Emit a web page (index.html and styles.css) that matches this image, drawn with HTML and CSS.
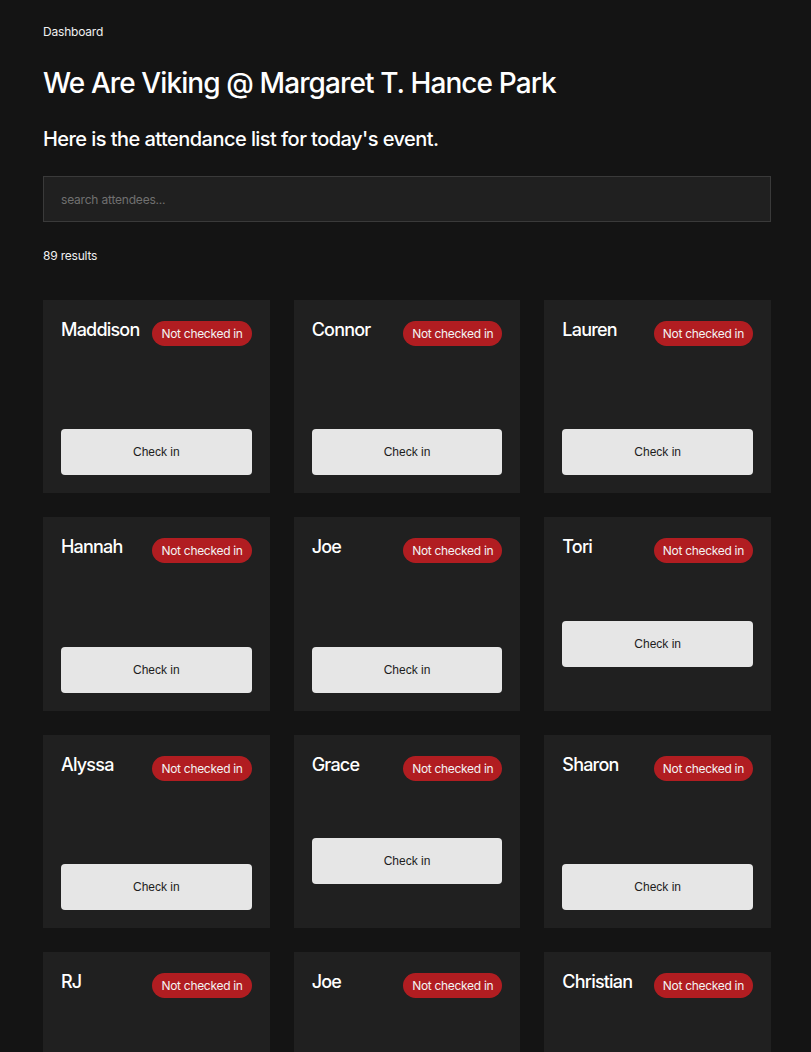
FILE: index.html
```html
<!DOCTYPE html>
<html lang="en">
<head>
    <meta charset="UTF-8">
    <meta name="viewport" content="width=device-width, initial-scale=1.0">
    <title>Attendance</title>
    <link rel="stylesheet" href="styles.css">
</head>
<body>

    <div class="page">
        <a class="crumb" href="#">Dashboard</a>
        <h1 class="event-title">We Are Viking @ Margaret T. Hance Park</h1>
        <h2 class="event-sub">Here is the attendance list for today's event.</h2>

        <input type="text" class="search" placeholder="search attendees...">

        <p class="count">89 results</p>

        <div class="grid">
            <div class="card">
                <div class="card-head"><span class="name">Maddison</span><span class="badge">Not checked in</span></div>
                <button class="check-btn">Check in</button>
            </div>
            <div class="card">
                <div class="card-head"><span class="name">Connor</span><span class="badge">Not checked in</span></div>
                <button class="check-btn">Check in</button>
            </div>
            <div class="card">
                <div class="card-head"><span class="name">Lauren</span><span class="badge">Not checked in</span></div>
                <button class="check-btn">Check in</button>
            </div>

            <div class="card">
                <div class="card-head"><span class="name">Hannah</span><span class="badge">Not checked in</span></div>
                <button class="check-btn">Check in</button>
            </div>
            <div class="card">
                <div class="card-head"><span class="name">Joe</span><span class="badge">Not checked in</span></div>
                <button class="check-btn">Check in</button>
            </div>
            <div class="card">
                <div class="card-head"><span class="name">Tori</span><span class="badge">Not checked in</span></div>
                <button class="check-btn">Check in</button>
                <div class="card-foot"></div>
            </div>

            <div class="card">
                <div class="card-head"><span class="name">Alyssa</span><span class="badge">Not checked in</span></div>
                <button class="check-btn">Check in</button>
            </div>
            <div class="card">
                <div class="card-head"><span class="name">Grace</span><span class="badge">Not checked in</span></div>
                <button class="check-btn">Check in</button>
                <div class="card-foot"></div>
            </div>
            <div class="card">
                <div class="card-head"><span class="name">Sharon</span><span class="badge">Not checked in</span></div>
                <button class="check-btn">Check in</button>
            </div>

            <div class="card">
                <div class="card-head"><span class="name">RJ</span><span class="badge">Not checked in</span></div>
                <button class="check-btn">Check in</button>
            </div>
            <div class="card">
                <div class="card-head"><span class="name">Joe</span><span class="badge">Not checked in</span></div>
                <button class="check-btn">Check in</button>
            </div>
            <div class="card">
                <div class="card-head"><span class="name">Christian</span><span class="badge">Not checked in</span></div>
                <button class="check-btn">Check in</button>
            </div>
        </div>
    </div>

</body>
</html>
```

FILE: styles.css
```css
body {
    margin: 0;
    background: #141414;
    color: #f5f5f5;
    font-family: Inter, "Noto Sans", sans-serif;
}

.page {
    padding: 23px 40px 40px 43px;
}

.crumb {
    display: block;
    font-size: 12px;
    line-height: 18px;
    letter-spacing: -0.2px;
    color: #f0f0f0;
    text-decoration: none;
}

.event-title {
    margin: 24px 0 0;
    font-size: 28px;
    line-height: 36px;
    font-weight: 500;
    letter-spacing: -0.9px;
    color: #fff;
}

.event-sub {
    margin: 24px 0 0;
    font-size: 20px;
    line-height: 28px;
    font-weight: 500;
    letter-spacing: -0.55px;
    color: #fff;
}

.search {
    display: block;
    box-sizing: border-box;
    width: 100%;
    height: 46px;
    margin-top: 23px;
    padding: 0 17px;
    background: #202020;
    border: 1px solid #3a3a3a;
    color: #eee;
    font-family: Inter, sans-serif;
    font-size: 12px;
    letter-spacing: -0.2px;
    outline: none;
}

.search::placeholder {
    color: #707070;
}

.count {
    margin: 25px 0 0;
    font-size: 12px;
    line-height: 18px;
    letter-spacing: -0.2px;
    color: #f0f0f0;
}

.grid {
    display: grid;
    grid-template-columns: repeat(3, 1fr);
    grid-auto-rows: 193.33px;
    gap: 24px;
    margin-top: 35px;
}

.card {
    display: flex;
    flex-direction: column;
    background: #202020;
    padding: 18px;
}

.card-head {
    display: flex;
    justify-content: space-between;
    align-items: flex-start;
}

.name {
    font-size: 18px;
    line-height: 24px;
    font-weight: 500;
    letter-spacing: -0.8px;
    color: #fff;
}

.badge {
    margin-top: 3px;
    padding: 4px 9px;
    border-radius: 13px;
    background: #b11d21;
    color: #f3f3f3;
    font-size: 12px;
    line-height: 17px;
    letter-spacing: -0.3px;
}

.check-btn {
    margin-top: auto;
    height: 46px;
    border: none;
    border-radius: 4px;
    background: #e6e6e6;
    color: #1c1c1c;
    font-family: "Liberation Sans", Arial, sans-serif;
    font-size: 12px;
    cursor: pointer;
}

.check-btn:hover {
    background: #d4d4d4;
}

.card-foot {
    height: 26px;
}
```
